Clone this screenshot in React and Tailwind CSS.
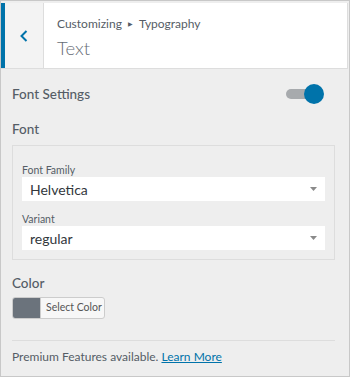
export default function App() {
  const font = { fontFamily: 'Lato, "Noto Sans", sans-serif' };
  return (
    <div className="w-[350px] h-[377px] border border-[#c8c8c8] bg-[#eeeeee] text-[#555d66] overflow-hidden" style={font}>
      <div className="mt-[2px] mr-[1px] flex h-[66px] border-b border-[#dddddd] border-r border-r-[#dddddd] bg-white">
        <div className="flex w-[43px] items-center justify-center border-l-4 border-l-[#0073aa] border-r border-r-[#dddddd] bg-[#f3f3f3]">
          <svg width="10" height="14" viewBox="0 0 10 14" fill="none">
            <path d="M7.5 2 L2.5 7 L7.5 12" stroke="#0073aa" strokeWidth="2" />
          </svg>
        </div>
        <div className="flex flex-col pl-[13px] pt-[12px]">
          <div className="flex items-center text-[12px] leading-[18px]">
            <span>Customizing</span>
            <span className="mx-[6px] text-[6px]">▶</span>
            <span>Typography</span>
          </div>
          <div className="mt-[3px] text-[18.5px] leading-[24px] font-light text-[#666d75]">Text</div>
        </div>
      </div>

      <div className="pl-[11px] pr-[14px]">
        <div className="mt-[15px] flex items-center justify-between">
          <span className="text-[13.5px] leading-[20px] font-medium">Font Settings</span>
          <div className="relative mr-[11px] h-[20px] w-[38px]">
            <div className="absolute left-0 top-[5px] h-[10px] w-[30px] rounded-full bg-[#a7aaad]"></div>
            <div className="absolute right-0 top-0 h-[20px] w-[20px] rounded-full bg-[#0073aa]"></div>
          </div>
        </div>

        <div className="mt-[15px] text-[13.5px] leading-[20px] font-medium">Font</div>

        <div className="mt-[6px] border border-[#dddddd] px-[9px] pt-[17px] pb-[9px]">
          <div className="text-[10.5px] leading-[14px] text-[#555d66]">Font Family</div>
          <div className="flex h-[24px] items-center justify-between bg-white pl-[8px] pr-[8px] text-[14px] text-[#32373c]">
            <span>Helvetica</span>
            <svg width="7" height="4" viewBox="0 0 7 4"><path d="M0 0 L7 0 L3.5 4 Z" fill="#8a8a8a" /></svg>
          </div>
          <div className="mt-[11px] text-[10.5px] leading-[14px] text-[#555d66]">Variant</div>
          <div className="flex h-[24px] items-center justify-between bg-white pl-[8px] pr-[8px] text-[14px] text-[#32373c]">
            <span>regular</span>
            <svg width="7" height="4" viewBox="0 0 7 4"><path d="M0 0 L7 0 L3.5 4 Z" fill="#8a8a8a" /></svg>
          </div>
        </div>

        <div className="mt-[13px] text-[13.5px] leading-[20px] font-medium">Color</div>
        <div className="mt-[4px] flex h-[22px] w-[93px] overflow-hidden rounded-[3px] border border-[#cccccc] bg-[#f7f7f7]">
          <div className="w-[27px] bg-[#6b737c]"></div>
          <div className="flex flex-1 items-center border-l border-[#cccccc] pl-[5px] text-[10.5px] text-[#555555]">Select Color</div>
        </div>

        <div className="mt-[21px] border-t border-[#dddddd]"></div>
        <div className="mt-[8px] text-[12px] leading-[16px]">
          Premium Features available. <span className="text-[#0073aa] underline">Learn More</span>
        </div>
      </div>
    </div>
  );
}
